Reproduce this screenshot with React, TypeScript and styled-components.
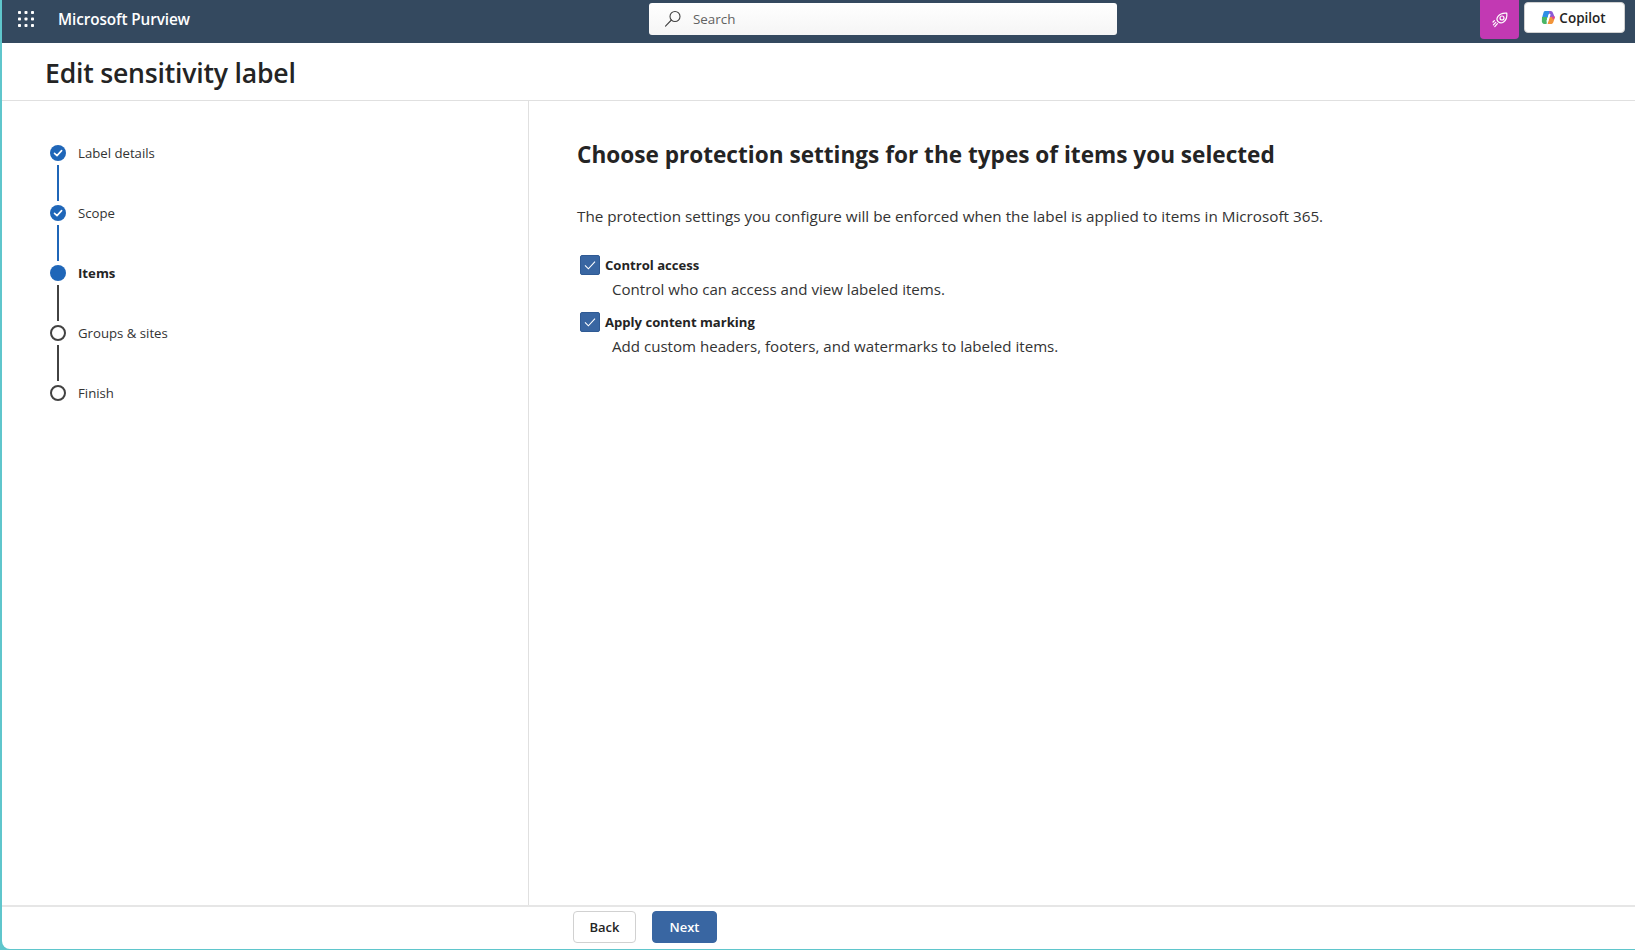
import React, { FC } from "react";
import styled, { createGlobalStyle } from "styled-components";

const GlobalStyle = createGlobalStyle`
  html, body {
    margin: 0;
    padding: 0;
    background: #ffffff;
    overflow: hidden;
  }
  * {
    box-sizing: border-box;
  }
`;

const FONT = `"Open Sans", "Noto Sans", "Liberation Sans", sans-serif`;

const Frame = styled.div`
  width: 1635px;
  height: 950px;
  background: #5fc6cc;
  padding: 0 0 1px 2px;
  font-family: ${FONT};
  color: #242424;
`;

const Shell = styled.div`
  height: 100%;
  display: flex;
  flex-direction: column;
  background: #ffffff;
  border-bottom-left-radius: 8px;
`;

const TopBar = styled.header`
  height: 43px;
  background: #34495f;
  display: flex;
  align-items: flex-start;
`;

const Waffle = styled.div`
  width: 56px;
  height: 43px;
  padding: 11px 0 0 16px;
  flex: none;
  svg {
    display: block;
  }
`;

const Brand = styled.div`
  color: #ffffff;
  font-size: 15.3px;
  font-weight: 600;
  line-height: 38px;
  letter-spacing: -0.1px;
  width: 591px;
  flex: none;
`;

const SearchBox = styled.div`
  width: 468px;
  height: 32px;
  margin-top: 3px;
  flex: none;
  background: linear-gradient(#ffffff, #f5f5f5);
  border-radius: 3px;
  display: flex;
  align-items: center;
  padding-left: 15px;
  gap: 11px;
  color: #616161;
  font-size: 13.4px;
`;

const TopActions = styled.div`
  margin-left: auto;
  display: flex;
  align-items: flex-start;
  gap: 5px;
  padding-right: 10px;
`;

const PinkButton = styled.div`
  width: 39px;
  height: 39px;
  background: #c239b3;
  border-radius: 0 0 4px 4px;
  display: flex;
  align-items: center;
  justify-content: center;
`;

const CopilotButton = styled.div`
  width: 101px;
  height: 31px;
  margin-top: 2px;
  background: #ffffff;
  border: 1px solid #d1d1d1;
  border-radius: 4px;
  display: flex;
  align-items: center;
  justify-content: center;
  gap: 3px;
  padding-right: 2px;
  font-size: 13.5px;
  font-weight: 600;
`;

const TitleBar = styled.div`
  height: 58px;
  padding: 2px 0 0 43px;
  border-bottom: 1px solid #e0e0e0;
  display: flex;
  align-items: center;
`;

const PageTitle = styled.h1`
  margin: 0;
  font-size: 26.6px;
  font-weight: 600;
  color: #242424;
  letter-spacing: -0.2px;
`;

const Body = styled.div`
  flex: 1;
  display: flex;
  min-height: 0;
`;

const Sidebar = styled.nav`
  width: 527px;
  flex: none;
  border-right: 1px solid #e0e0e0;
  padding: 44px 0 0 48px;
`;

const Step = styled.div`
  display: flex;
  flex-direction: column;
`;

const StepRow = styled.div`
  display: flex;
  align-items: center;
  height: 16px;
  gap: 12px;
`;

const Dot = styled.span<{ $state: StepState }>`
  width: 16px;
  height: 16px;
  flex: none;
  border-radius: 50%;
  display: flex;
  align-items: center;
  justify-content: center;
  background: ${(p) => (p.$state === "todo" ? "#ffffff" : "#1f66b8")};
  border: ${(p) => (p.$state === "todo" ? "2px solid #424242" : "none")};
`;

const StepLabel = styled.span<{ $active: boolean }>`
  font-size: 13.2px;
  font-weight: ${(p) => (p.$active ? 700 : 400)};
  color: ${(p) => (p.$active ? "#242424" : "#333333")};
`;

const Connector = styled.span<{ $done: boolean }>`
  display: block;
  width: 2px;
  height: 36px;
  margin: 4px 0 4px 7px;
  background: ${(p) => (p.$done ? "#1f66b8" : "#424242")};
`;

const Content = styled.main`
  flex: 1;
  padding: 37px 0 0 48px;
`;

const Heading = styled.h2`
  margin: 0;
  font-size: 22.6px;
  line-height: 34px;
  font-weight: 700;
  color: #242424;
`;

const Intro = styled.p`
  margin: 34px 0 0;
  font-size: 15.25px;
  line-height: 20px;
  color: #333333;
`;

const OptionList = styled.div`
  margin: 29px 0 0 3px;
  display: flex;
  flex-direction: column;
  gap: 13px;
`;

const Option = styled.div`
  display: flex;
  flex-direction: column;
`;

const OptionHead = styled.div`
  display: flex;
  align-items: center;
  gap: 5px;
  height: 20px;
`;

const CheckBox = styled.span`
  width: 20px;
  height: 20px;
  flex: none;
  background: #3966a2;
  border: 1px solid #2f5a94;
  border-radius: 2px;
  display: flex;
  align-items: center;
  justify-content: center;
`;

const OptionTitle = styled.span`
  font-size: 13.1px;
  font-weight: 700;
  color: #242424;
`;

const OptionText = styled.div`
  margin: 4px 0 0 32px;
  font-size: 15.1px;
  line-height: 20px;
  color: #333333;
`;

const Footer = styled.footer`
  height: 44px;
  flex: none;
  border-top: 2px solid #e6e6e6;
  display: flex;
  align-items: flex-start;
  padding: 4px 0 0 571px;
  gap: 16px;
`;

const Button = styled.button<{ $primary?: boolean }>`
  height: 32px;
  width: ${(p) => (p.$primary ? "65px" : "63px")};
  padding: 0;
  border-radius: 4px;
  font-family: ${FONT};
  font-size: 13px;
  font-weight: 600;
  background: ${(p) => (p.$primary ? "#3966a2" : "#ffffff")};
  color: ${(p) => (p.$primary ? "#ffffff" : "#242424")};
  border: 1px solid ${(p) => (p.$primary ? "#3966a2" : "#d1d1d1")};
`;

type StepState = "done" | "current" | "todo";

const steps: { label: string; state: StepState }[] = [
  { label: "Label details", state: "done" },
  { label: "Scope", state: "done" },
  { label: "Items", state: "current" },
  { label: "Groups & sites", state: "todo" },
  { label: "Finish", state: "todo" },
];

const options = [
  {
    title: "Control access",
    text: "Control who can access and view labeled items.",
  },
  {
    title: "Apply content marking",
    text: "Add custom headers, footers, and watermarks to labeled items.",
  },
];

const WaffleIcon: FC = () => (
  <svg width="16" height="16" viewBox="0 0 16 16" fill="#ffffff">
    {[1.5, 8, 14.5].map((y) =>
      [1.5, 8, 14.5].map((x) => (
        <rect key={`${x}-${y}`} x={x - 1.5} y={y - 1.5} width="3" height="3" rx="0.8" />
      )),
    )}
  </svg>
);

const SearchIcon: FC = () => (
  <svg width="18" height="18" viewBox="0 0 18 18" fill="none" stroke="#424242" strokeWidth="1.1">
    <circle cx="11" cy="6.5" r="5" />
    <path d="M7.4 10 L1.5 16.2" strokeLinecap="round" />
  </svg>
);

const RocketIcon: FC = () => (
  <svg width="18" height="18" viewBox="0 0 18 18" fill="none" stroke="#ffffff" strokeWidth="1.2">
    <path d="M7 5.4 C8.8 3 12 1.8 15.8 2.2 C16.2 6 15 9.2 12.6 11 C11 12.2 8.6 12 7.2 10.8 C5.8 9.4 5.8 7 7 5.4 Z" strokeLinejoin="round" />
    <circle cx="11" cy="7" r="2" />
    <path d="M4.8 11.4 L2.4 13.8 M6.4 12.6 L3.8 15.6 M2 11 L3.4 9.6" strokeLinecap="round" />
  </svg>
);

const CopilotLogo: FC = () => (
  <svg width="15" height="15" viewBox="0 0 15 15">
    <path d="M4 1 H9 L6.6 8 H1 L2.4 3 C2.7 1.8 3.2 1 4 1 Z" fill="#2f8fe6" />
    <path d="M8 1 H9.6 C11 1 11.6 1.8 12 3 L14 8 H8.4 Z" fill="#8a5bd6" />
    <path d="M1 7 H6.2 L5.6 14 H3.4 C1.6 14 0.4 12 0.9 10 Z" fill="#49b667" />
    <path d="M8.6 7 H14 L12.4 12 C12 13.4 11 14 9.8 14 H6.6 Z" fill="#f2953a" />
    <path d="M10.4 6.6 H14 L13 9.6 C12 9.4 10.8 8.2 10.4 6.6 Z" fill="#e4478e" />
    <path d="M8.6 4.6 L6.4 11" stroke="#ffffff" strokeWidth="1.8" strokeLinecap="round" />
  </svg>
);

const StepCheck: FC = () => (
  <svg width="10" height="10" viewBox="0 0 10 10" fill="none" stroke="#ffffff" strokeWidth="1.6">
    <path d="M1.5 5.4 L4 7.6 L8.6 2.6" strokeLinecap="round" strokeLinejoin="round" />
  </svg>
);

const BoxCheck: FC = () => (
  <svg width="14" height="14" viewBox="0 0 14 14" fill="none" stroke="#ffffff" strokeWidth="1.1">
    <path d="M2 7.4 L5.4 10.8 L12 3.6" />
  </svg>
);

export default function App() {
  return (
    <Frame>
      <GlobalStyle />
      <Shell>
        <TopBar>
          <Waffle>
            <WaffleIcon />
          </Waffle>
          <Brand>Microsoft Purview</Brand>
          <SearchBox>
            <SearchIcon />
            Search
          </SearchBox>
          <TopActions>
            <PinkButton>
              <RocketIcon />
            </PinkButton>
            <CopilotButton>
              <CopilotLogo />
              Copilot
            </CopilotButton>
          </TopActions>
        </TopBar>
        <TitleBar>
          <PageTitle>Edit sensitivity label</PageTitle>
        </TitleBar>
        <Body>
          <Sidebar>
            {steps.map((step, i) => (
              <Step key={step.label}>
                <StepRow>
                  <Dot $state={step.state}>
                    {step.state === "done" && <StepCheck />}
                  </Dot>
                  <StepLabel $active={step.state === "current"}>
                    {step.label}
                  </StepLabel>
                </StepRow>
                {i < steps.length - 1 && (
                  <Connector $done={step.state === "done"} />
                )}
              </Step>
            ))}
          </Sidebar>
          <Content>
            <Heading>Choose protection settings for the types of items you selected</Heading>
            <Intro>
              The protection settings you configure will be enforced when the
              label is applied to items in Microsoft 365.
            </Intro>
            <OptionList>
              {options.map((option) => (
                <Option key={option.title}>
                  <OptionHead>
                    <CheckBox>
                      <BoxCheck />
                    </CheckBox>
                    <OptionTitle>{option.title}</OptionTitle>
                  </OptionHead>
                  <OptionText>{option.text}</OptionText>
                </Option>
              ))}
            </OptionList>
          </Content>
        </Body>
        <Footer>
          <Button>Back</Button>
          <Button $primary>Next</Button>
        </Footer>
      </Shell>
    </Frame>
  );
}
